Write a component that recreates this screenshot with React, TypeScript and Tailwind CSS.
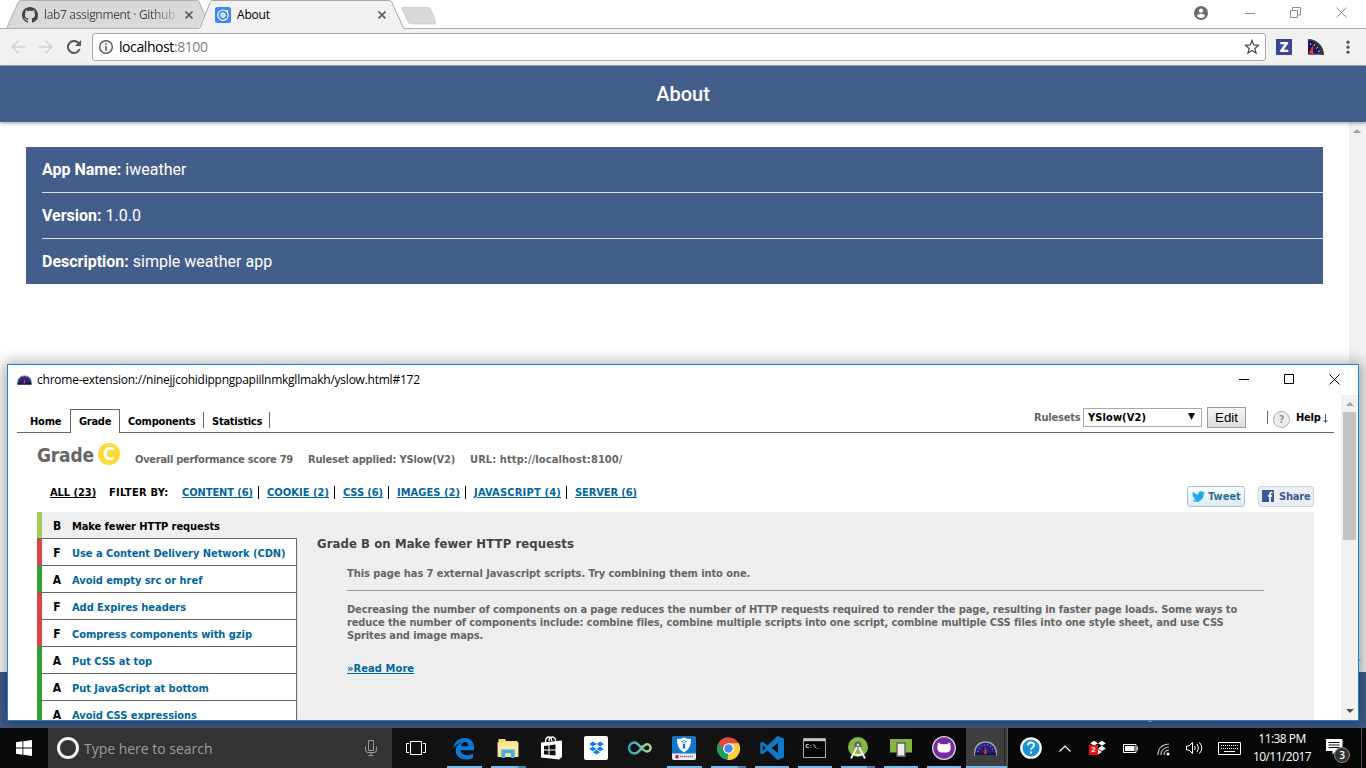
import React from "react";

const SEG = "font-['Open_Sans',sans-serif]";

function Gauge({ className }: { className: string }) {
  return (
    <svg viewBox="0 0 24 15" className={className}>
      <path d="M0 15V12C0 5 5 0 12 0s12 5 12 12v3z" fill="#a4a4b0" />
      <path d="M1.500 14v-2C1.500 6 6 1.500 12 1.500S22.500 6 22.500 12v2z" fill="#20207c" />
      <path d="M4 11c.5-4.500 4-7.500 8-7.500s7.500 3 8 7.500" fill="none" stroke="#9fa3d8" strokeWidth="1.200" strokeDasharray="1 2.400" />
      <path d="M1 12h22v3H1z" fill="#15153f" />
      <path d="M12 4l1.600 9h-3.200z" fill="#f02a2a" />
    </svg>
  );
}

function QuarterGauge() {
  return (
    <svg viewBox="0 0 16 16" className="h-4 w-4">
      <path d="M0 0c9 0 16 7 16 16H0z" fill="#3a3a3a" />
      <path d="M0 2c7 0 13 6 13 14H0z" fill="#17175e" />
      <path d="M2 4l1 2M7 5l-1 2M10 8l-2 1.500M12 12l-2 .5" stroke="#c4c8ee" strokeWidth="1" />
      <path d="M5.500 5L1 14l4 1z" fill="#f53030" />
      <path d="M0 14.500h13V16H0z" fill="#6d5a8e" />
    </svg>
  );
}

function GithubMark({ className }: { className: string }) {
  return (
    <svg viewBox="0 0 16 16" className={className} fill="currentColor">
      <path d="M8 0C3.580 0 0 3.580 0 8c0 3.540 2.290 6.530 5.470 7.590.4.070.55-.17.55-.38 0-.19-.01-.82-.01-1.490-2.010.37-2.530-.49-2.690-.94-.09-.23-.48-.94-.82-1.130-.28-.15-.68-.52-.01-.53.63-.01 1.080.58 1.230.82.72 1.210 1.870.87 2.330.66.070-.52.28-.87.51-1.070-1.780-.2-3.640-.89-3.640-3.950 0-.87.31-1.590.82-2.150-.08-.2-.36-1.020.08-2.120 0 0 .67-.21 2.200.82.64-.18 1.320-.27 2-.27s1.360.09 2 .27c1.530-1.040 2.200-.82 2.200-.82.44 1.100.16 1.920.08 2.120.51.56.82 1.270.82 2.150 0 3.070-1.870 3.750-3.650 3.950.29.25.54.73.54 1.480 0 1.070-.01 1.930-.01 2.200 0 .21.15.46.55.38A8.010 8.010 0 0 0 16 8c0-4.420-3.580-8-8-8z" />
    </svg>
  );
}

function TabStrip() {
  return (
    <div className="relative h-[29px] bg-white">
      <svg viewBox="0 0 1366 29" className="absolute inset-0 h-[29px] w-[1366px]">
        <path d="M0 28.500h1366" stroke="#acacac" />
        <path d="M6.500 28.500L18.500 1.500q.6-1 2-1H197q1.500 0 2 1L206 18l-7 10.500z" fill="#d9d9d9" stroke="#b0b0b0" />
        <path d="M198 29L210.500 1.500q.5-1 2-1H389q2 0 2.500 1L404 28.500v.5z" fill="#f1f1f1" />
        <path d="M198 28.500q1.500 0 2-1L210.500 1.500q.5-1 2-1H389q2 0 2.500 1L403 27q.7 1.500 2.500 1.500" fill="none" stroke="#a5a5a5" />
        <path d="M403 7.500h25q2 0 2.700 1.500l5 13q.6 2-1.200 2h-24q-1.500 0-2.200-1.500L402 9q-.5-1.500 1-1.500z" fill="#d8d8d8" stroke="#c6c6c6" strokeWidth=".7" />
      </svg>
      <div className={`relative flex h-[29px] items-center text-[12px] text-black ${SEG}`}>
        <GithubMark className="ml-[22px] h-4 w-4 text-[#444]" />
        <span className="ml-[6px] w-[135px] overflow-hidden whitespace-nowrap bg-[linear-gradient(90deg,#444_80%,#c8c8c8)] bg-clip-text tracking-[-0.33px] text-transparent">lab7 assignment · Github</span>
        <svg viewBox="0 0 8 8" className="ml-[6px] h-2 w-2"><path d="M.5.5l7 7M7.500.5l-7 7" stroke="#5a5a5a" strokeWidth="1.600" /></svg>
        <svg viewBox="0 0 16 16" className="ml-[22px] h-4 w-4">
          <rect width="16" height="16" rx="2.500" fill="#3e86f7" />
          <circle cx="8" cy="8.200" r="5.200" fill="none" stroke="#fff" strokeWidth="1.200" />
          <circle cx="8" cy="8.200" r="2.400" fill="#bcd6ff" stroke="#fff" strokeWidth=".8" />
          <circle cx="12.300" cy="4" r="1" fill="#fff" />
        </svg>
        <span className="ml-[6px] w-[35px] tracking-[-0.2px]">About</span>
        <svg viewBox="0 0 8 8" className="ml-[106px] h-2 w-2"><path d="M.5.5l7 7M7.500.5l-7 7" stroke="#5a5a5a" strokeWidth="1.600" /></svg>
        <svg viewBox="0 0 14 14" className="ml-[808px] -mt-[3px] h-[14px] w-[14px]">
          <circle cx="7" cy="7" r="7" fill="#6b6b6b" /><circle cx="7" cy="4.700" r="2.100" fill="#fff" /><path d="M2.900 10c.8-3 7.400-3 8.200 0-2 2.600-6.200 2.600-8.200 0z" fill="#fff" />
        </svg>
        <svg viewBox="0 0 10 10" className="ml-[37px] -mt-[3px] h-[10px] w-[10px]"><path d="M0 5.500h10" stroke="#8e8e8e" /></svg>
        <svg viewBox="0 0 11 11" className="ml-[35px] -mt-[4px] h-[11px] w-[11px]"><path d="M.5 3.500h7v7h-7zM2.500 3.500v-3h8v7.500H8" fill="none" stroke="#8e8e8e" /></svg>
        <svg viewBox="0 0 11 11" className="ml-[35px] -mt-[4px] h-[11px] w-[11px]"><path d="M.5.5l10 10M10.500.5l-10 10" stroke="#8e8e8e" /></svg>
      </div>
    </div>
  );
}

function Toolbar() {
  return (
    <div className="flex h-[37px] items-center border-b border-[#b0b0b0] bg-[#f1f1f1]">
      <svg viewBox="0 0 14 14" className="ml-[11px] h-[14px] w-[14px]"><path d="M14 7H1.500M7.500.8L1.300 7l6.200 6.200" fill="none" stroke="#d2d2d2" strokeWidth="1.700" /></svg>
      <svg viewBox="0 0 14 14" className="ml-[14px] h-[14px] w-[14px]"><path d="M0 7h12.500M6.500.8L12.700 7l-6.200 6.200" fill="none" stroke="#d2d2d2" strokeWidth="1.700" /></svg>
      <svg viewBox="0 0 14 14" className="ml-[14px] h-[14px] w-[14px]"><path d="M12.600 9A6 6 0 1 1 11.300 2.800L12.500 4" fill="none" stroke="#555" strokeWidth="2" /><path d="M14 0v6H8z" fill="#555" /></svg>
      <div className="ml-[11px] flex h-[28px] w-[1174px] items-center rounded-[3px] border border-[#a9a9a9] bg-white">
        <svg viewBox="0 0 14 14" className="ml-[6px] h-[14px] w-[14px]"><circle cx="7" cy="7" r="6.300" fill="none" stroke="#555" strokeWidth="1.400" /><path d="M7 6v4.700M7 3.200v1.700" stroke="#555" strokeWidth="1.600" /></svg>
        <span className={`-mt-px ml-[6px] text-[14px] tracking-[-0.42px] text-black ${SEG}`}>localhost<span className="text-[#808080]">:8100</span></span>
        <svg viewBox="0 0 16 16" className="ml-auto mr-[5px] h-4 w-4"><path d="M8 1.500l1.800 4.400 4.700.4-3.600 3.100 1.100 4.600L8 11.500l-4 2.500 1.100-4.600-3.600-3.100 4.700-.4z" fill="none" stroke="#4f4f4f" strokeWidth="1.300" /></svg>
      </div>
      <span className="ml-[10px] flex h-4 w-4 items-center justify-center bg-[#3a4595] font-['Open_Sans',sans-serif] text-[14px] font-extrabold leading-4 text-white"><span className="-mt-px">Z</span></span>
      <div className="ml-[16px]"><QuarterGauge /></div>
      <svg viewBox="0 0 4 14" className="ml-[22px] h-[14px] w-[4px]" fill="#555"><circle cx="2" cy="2.200" r="1.600" /><circle cx="2" cy="7.200" r="1.600" /><circle cx="2" cy="12.200" r="1.600" /></svg>
    </div>
  );
}

function AboutRow({ label, value, last }: { label: string; value: string; last?: boolean }) {
  return (
    <div className={last ? "flex h-[45px] items-center" : "flex h-[46px] items-center border-b border-[#dedede]"}>
      <span><b>{label}</b> {value}</span>
    </div>
  );
}

function AboutPage() {
  return (
    <div className="flex flex-1 flex-col bg-white font-['Roboto',sans-serif] text-white">
      <div className="z-10 flex h-[56px] items-center justify-center bg-[#445e8c] text-[20px] font-medium shadow-[0_1px_4px_rgba(0,0,0,0.4)]">About</div>
      <div className="flex flex-1">
        <div className="flex-1 pl-[26px] pr-[26px] pt-[25px]">
          <div className="bg-[#445e8c] pl-4 text-[16px]">
            <AboutRow label="App Name:" value="iweather" />
            <AboutRow label="Version:" value="1.0.0" />
            <AboutRow label="Description:" value="simple weather app" last />
          </div>
        </div>
        <div className="flex w-[17px] flex-col justify-between bg-[#f1f1f1] pb-[9px] pl-[4px] pt-[7px]">
          <svg viewBox="0 0 8 4" className="h-1 w-2"><path d="M0 4l4-4 4 4z" fill="#a0a0a0" /></svg>
          <svg viewBox="0 0 8 4" className="h-1 w-2"><path d="M0 0l4 4 4-4z" fill="#a0a0a0" /></svg>
        </div>
      </div>
      <div className="flex h-[56px] items-end bg-[#445e8c]">
        <i className="mb-[6px] ml-[1148px] h-px w-[4px] bg-[#aab6cc]" />
      </div>
    </div>
  );
}

const FILTERS = [
  { text: "CONTENT (6)", cls: "w-[71px] tracking-[-0.08px]" },
  { text: "COOKIE (2)", cls: "w-[62px] tracking-[0.04px]" },
  { text: "CSS (6)", cls: "w-[40px] tracking-[-0.1px]" },
  { text: "IMAGES (2)", cls: "w-[63px] tracking-[0.04px]" },
  { text: "JAVASCRIPT (4)", cls: "w-[87px] tracking-[0.2px]" },
  { text: "SERVER (6)", cls: "w-[62px] tracking-[-0.09px]" },
];

const RULES = [
  { grade: "F", color: "bg-[#dd4444]", text: "Use a Content Delivery Network (CDN)" },
  { grade: "A", color: "bg-[#33a033]", text: "Avoid empty src or href" },
  { grade: "F", color: "bg-[#dd4444]", text: "Add Expires headers" },
  { grade: "F", color: "bg-[#dd4444]", text: "Compress components with gzip" },
  { grade: "A", color: "bg-[#33a033]", text: "Put CSS at top" },
  { grade: "A", color: "bg-[#33a033]", text: "Put JavaScript at bottom" },
  { grade: "A", color: "bg-[#33a033]", text: "Avoid CSS expressions" },
];

function PopupTabs() {
  return (
    <div className="mr-[7px] flex h-[38px] border-b border-[#666] text-black">
      <div className="flex h-[37px] items-center pl-[13px] pt-[15px]">
        <span className="w-[40px] tracking-[-0.2px]">Home</span>
      </div>
      <div className="mt-[14px] flex h-[24px] w-[50px] items-center justify-center border border-b-0 border-[#666] bg-white tracking-[-0.25px]">Grade</div>
      <div className="flex h-[37px] items-center pt-[15px]">
        <span className="ml-[8px] w-[75px] tracking-[-0.22px]">Components</span>
        <i className="-mt-[2px] h-4 w-px bg-[#666]" />
        <span className="ml-[8px] w-[57px] tracking-[-0.23px]">Statistics</span>
        <i className="-mt-[2px] h-4 w-px bg-[#666]" />
      </div>
      <div className="ml-auto flex h-[37px] items-center pt-[8px]">
        <span className="w-[49px] tracking-[-0.2px] text-[#666]">Rulesets</span>
        <div className="flex h-[19px] w-[119px] items-center justify-between border border-[#a9a9a9] bg-white pl-[4px] pr-[6px] tracking-[0.1px]">
          <span>YSlow(V2)</span>
          <svg viewBox="0 0 7 7" className="-mt-[2px] h-[7px] w-[7px]"><path d="M0 0h7L3.500 7z" fill="#111" /></svg>
        </div>
        <div className="ml-[5px] flex h-[21px] w-[39px] items-center justify-center border border-[#9c9c9c] bg-[linear-gradient(#f6f6f6,#dddddd)] font-['Liberation_Sans',sans-serif] text-[13.3px] font-normal">Edit</div>
        <i className="ml-[21px] h-[13px] w-px bg-[#666]" />
        <span className="ml-[5px] mt-[3px] flex h-[17px] w-[17px] items-center justify-center rounded-full border border-[#aaa] bg-[#eee] text-[11px] text-[#999]">?</span>
        <span className="ml-[6px] w-[27px] tracking-[-0.2px]">Help</span>
        <svg viewBox="0 0 5 9" className="mr-[6px] mt-[2px] h-[9px] w-[5px]"><path d="M2.500 0v8.500M.5 6l2 2.500 2-2.500" fill="none" stroke="#445" strokeWidth=".9" /></svg>
      </div>
    </div>
  );
}

function Popup() {
  return (
    <div className="absolute left-[7px] top-[364px] flex h-[357px] w-[1352px] flex-col overflow-hidden border border-[#1883d7] bg-white font-['DejaVu_Sans_Condensed','DejaVu_Sans',sans-serif] text-[11px] font-bold leading-[13px]">
      <div className={`flex h-[30px] shrink-0 items-center text-[12px] font-normal text-black ${SEG}`}>
        <Gauge className="ml-[9px] h-[10px] w-[15px]" />
        <span className="-mt-px ml-[5px] tracking-[-0.24px]">chrome-extension://ninejjcohidippngpapiilnmkgllmakh/yslow.html#172</span>
        <svg viewBox="0 0 10 10" className="ml-auto h-[10px] w-[10px]"><path d="M0 5.500h10" stroke="#000" transform="translate(0 -1)" /></svg>
        <svg viewBox="0 0 10 10" className="ml-[35px] -mt-[3px] h-[10px] w-[10px]"><path d="M.5.5h9v9h-9z" fill="none" stroke="#000" /></svg>
        <svg viewBox="0 0 11 11" className="ml-[35px] mr-[18px] -mt-[2px] h-[11px] w-[11px]"><path d="M.5.5l10 10M10.500.5l-10 10" stroke="#000" /></svg>
      </div>
      <div className="flex min-h-0 flex-1">
        <div className="flex min-w-0 flex-1 flex-col pl-[9px]">
          <PopupTabs />
          <div className="flex h-[42px] items-center pl-[20px] text-[#666]">
            <span className="mt-[2px] w-[61px] text-[19px] leading-[20px] tracking-[-0.2px]">Grade</span>
            <span className="flex h-[22px] w-[22px] items-center justify-center rounded-full bg-[#fddb36] text-[18px] leading-[22px] text-white">C</span>
            <span className="ml-[15px] mt-[10px] w-[173px] tracking-[-0.27px]">Overall performance score 79</span>
            <span className="mt-[10px] w-[162px] tracking-[-0.17px]">Ruleset applied: YSlow(V2)</span>
            <span className="mt-[10px] tracking-[0.1px]">URL: http://localhost:8100/</span>
          </div>
          <div className="flex h-[37px] items-center pb-[2px] pl-[33px] text-black">
            <span className="w-[59px] tracking-[-0.05px] underline underline-offset-1">ALL (23)</span>
            <span className="w-[73px] tracking-[0.3px]">FILTER BY:</span>
            {FILTERS.map((f, i) => (
              <div key={f.text} className="flex items-center">
                <span className={`whitespace-nowrap text-[#0066a0] underline underline-offset-1 ${f.cls}`}>{f.text}</span>
                {i < 5 && <i className="ml-[5px] mr-[8px] h-[13px] w-px bg-black" />}
              </div>
            ))}
            <div className="ml-auto mr-[13px] mt-[7px] flex h-[21px] w-[58px] items-center rounded-[3px] border border-[#a6c4d8] bg-[linear-gradient(#ffffff,#dcebf6)] pl-[4px] text-[#2e6e98]">
              <svg viewBox="0 0 24 24" className="h-[13px] w-[13px] shrink-0" fill="#1da9ea"><path d="M23.953 4.570a10 10 0 0 1-2.825.775 4.958 4.958 0 0 0 2.163-2.723 10 10 0 0 1-3.127 1.184 4.920 4.920 0 0 0-8.384 4.482C7.690 8.095 4.067 6.130 1.640 3.162a4.822 4.822 0 0 0-.666 2.475c0 1.710.87 3.213 2.188 4.096a4.904 4.904 0 0 1-2.228-.616v.06a4.923 4.923 0 0 0 3.946 4.827 4.996 4.996 0 0 1-2.212.085 4.936 4.936 0 0 0 4.604 3.417 9.867 9.867 0 0 1-6.102 2.105c-.39 0-.779-.023-1.170-.067a13.995 13.995 0 0 0 7.557 2.209c9.053 0 13.998-7.496 13.998-13.985 0-.21 0-.42-.015-.63a9.935 9.935 0 0 0 2.460-2.548z" /></svg>
              <span className="ml-[3px]">Tweet</span>
            </div>
            <div className="mr-[27px] mt-[7px] flex h-[21px] w-[56px] items-center rounded-[3px] border border-[#cad4e7] bg-[#eceef5] pl-[3px] text-[#3b5998]">
              <svg viewBox="0 0 12 12" className="h-3 w-3 shrink-0"><path d="M0 0h12v12H0z" fill="#3b5998" /><path d="M10.500 2.500H9.300Q8 2.500 8 4v8M5.800 6h4.400" fill="none" stroke="#fff" strokeWidth="1.700" /></svg>
              <span className="ml-[5px] tracking-[-0.2px]">Share</span>
            </div>
          </div>
          <div className="ml-[20px] mr-[27px] flex min-h-0 flex-1 overflow-hidden bg-[#eeeeee]">
            <div className="w-[260px] shrink-0">
              <div className="flex h-[27px] items-center border-b border-[#666] bg-[#eee]">
                <i className="h-full w-[5px] bg-[#a4cc58]" />
                <span className="mt-[2px] w-[30px] text-center text-[12px] text-black">B</span>
                <span className="mt-[2px] tracking-[-0.08px] text-black">Make fewer HTTP requests</span>
              </div>
              {RULES.map((r) => (
                <div key={r.text} className="flex h-[27px] items-center border-b border-r border-[#666] bg-white">
                  <i className={`h-full w-[5px] ${r.color}`} />
                  <span className="mt-[2px] w-[30px] text-center text-[12px] text-black">{r.grade}</span>
                  <span className="mt-[2px] tracking-[-0.04px] text-[#0066a0]">{r.text}</span>
                </div>
              ))}
            </div>
            <div className="flex-1 pl-[20px] pr-[50px] pt-[24px] text-[#666]">
              <div className="text-[13px] leading-[15px] tracking-[0.08px] text-[#444]">Grade B on Make fewer HTTP requests</div>
              <div className="ml-[30px] mt-[16px] border-b border-[#999] pb-[10px] tracking-[-0.07px]">This page has 7 external Javascript scripts. Try combining them into one.</div>
              <div className="ml-[30px] mt-[12px] whitespace-nowrap tracking-[-0.115px]">
                Decreasing the number of components on a page reduces the number of HTTP requests required to render the page, resulting in faster page loads. Some ways to<br />
                reduce the number of components include: combine files, combine multiple scripts into one script, combine multiple CSS files into one style sheet, and use CSS<br />
                Sprites and image maps.
              </div>
              <div className="ml-[30px] mt-[20px] tracking-[0.1px] text-[#0066a0] underline underline-offset-1">»Read More</div>
            </div>
          </div>
        </div>
        <div className="flex w-[17px] flex-col items-center bg-[#f1f1f1] pt-[7px]">
          <svg viewBox="0 0 8 4" className="h-1 w-2"><path d="M0 4l4-4 4 4z" fill="#a0a0a0" /></svg>
          <div className="mt-[6px] h-[128px] w-[13px] bg-[#c1c1c1]" />
          <svg viewBox="0 0 8 4" className="mb-[7px] mt-auto h-1 w-2"><path d="M0 0l4 4 4-4z" fill="#505050" /></svg>
        </div>
      </div>
    </div>
  );
}

function TaskButton({ children, line, w = "w-[44px]" }: { children: React.ReactNode; line?: "one" | "two"; w?: string }) {
  return (
    <div className={`relative flex h-full shrink-0 items-center justify-center ${w}`}>
      {children}
      {line && <i className="absolute bottom-0 left-[5px] right-[4px] h-[2px] bg-[#76b9ed]" />}
      {line === "two" && <i className="absolute bottom-0 right-[4px] h-[2px] w-[8px] bg-[#4f7fa6]" />}
    </div>
  );
}

const DROPBOX = "M6 1L0 5l6 4 6-4zM18 1l-6 4 6 4 6-4zM0 13l6 4 6-4-6-4zM18 9l-6 4 6 4 6-4zM6 18.300l6 4 6-4-6-4z";

function Taskbar() {
  return (
    <div className="flex h-[40px] items-center bg-[linear-gradient(100deg,#070a08,#111_30%,#141414_50%,#080808_70%,#050705)] text-white">
      <div className="flex w-[48px] shrink-0 justify-center">
        <svg viewBox="0 0 16 16" className="h-4 w-4" fill="#fff"><path d="M0 2.200l6.500-.9v6.300H0zM7.300 1.200L16 0v7.600H7.300zM0 8.400h6.500v6.300L0 13.800zM7.300 8.400H16V16l-8.700-1.200z" /></svg>
      </div>
      <div className="flex h-full w-[344px] shrink-0 items-center bg-[#333]">
        <i className="ml-[9px] h-[22px] w-[22px] rounded-full border-[3px] border-[#f0f0f0]" />
        <span className={`ml-[5px] text-[14px] tracking-[-0.02px] text-[#9c9c9c] ${SEG}`}>Type here to search</span>
        <svg viewBox="0 0 12 16" className="ml-auto mr-[15px] h-4 w-3"><path d="M3.500.5h5v10h-5zM.5 6.500V10q0 2.500 2.500 2.500h6q2.500 0 2.500-2.500V6.500M6 12.500v3M3.500 15.500h5" fill="none" stroke="#9a9a9a" /></svg>
      </div>
      <TaskButton w="w-[50px]">
        <svg viewBox="0 0 20 14" className="-ml-[2px] h-[14px] w-[20px]"><path d="M4.500.5h11v13h-11zM3 2.500H.5v9H3M17 2.500h2.500v9H17" fill="none" stroke="#fff" /></svg>
      </TaskButton>
      <TaskButton line="one">
        <svg viewBox="0 0 24 24" className="h-[23px] w-[22px]" fill="#0a7ad6"><path d="M.5 12C1 5 6 .500 12.500.500 19 .500 23 5 23 11.500V14H8.300c.2 3.800 3.700 5.500 7.200 5.300 2.300-.1 4.300-.7 6.300-1.800v4.800c-2.500 1.200-5 1.700-7.700 1.700C7.500 24 3 20 3 14.500c0-3.900 2-7 5.500-8.800C6 6 2.500 8.500.500 12zm8.300-2.500h7.900c0-2.800-1.300-4.500-3.800-4.500-2.300 0-3.800 1.900-4.100 4.500z" /></svg>
      </TaskButton>
      <TaskButton line="two">
        <svg viewBox="0 0 22 20" className="h-[19px] w-[22px]"><path d="M1 0h7l1 2h12v16H1z" fill="#f9d570" /><path d="M0 3.500h22V19H0z" fill="#fde8a0" /><path d="M4 20v-9h14v9h-4v-5H8v5z" fill="#3fb0e2" /></svg>
      </TaskButton>
      <TaskButton>
        <svg viewBox="0 0 22 24" className="-ml-[3px] h-[24px] w-[22px]"><path d="M5.500 6q0-4.500 3-5 3-.3 3.300 4M9 5q0-4 3.500-4.200Q15.500 1 15.500 5" fill="none" stroke="#fff" strokeWidth="1.300" /><path d="M1 6.500L22 4.500v16.500L19 23.500 1 21.500z" fill="#fff" /><path d="M4 10l4.500-.6v4.200H4zM9.500 9.300l6-.8v5h-6zM4 14.600h4.500v4.200L4 18.400zM9.500 14.600h6v5l-6-.6z" fill="#111" /></svg>
      </TaskButton>
      <TaskButton>
        <span className="flex h-6 w-6 items-center justify-center rounded-[2px] bg-white"><svg viewBox="0 0 24 23" className="h-[14px] w-[15px]" fill="#0a82ee"><path d={DROPBOX} /></svg></span>
      </TaskButton>
      <TaskButton>
        <svg viewBox="0 0 24 14" className="h-[14px] w-[24px]"><defs><linearGradient id="inf"><stop stopColor="#2ea3c4" /><stop offset=".55" stopColor="#71c1a5" /><stop offset="1" stopColor="#b2d58c" /></linearGradient></defs><path d="M15 4.500C12.500 8 11 12.500 6.500 12.500a5.500 5.500 0 0 1 0-11C11 1.500 14 10.500 19 10.500a3.500 3.500 0 0 0 0-7.300c-2.500 0-4 2.800-6 5.500" fill="none" stroke="url(#inf)" strokeWidth="2.400" /></svg>
      </TaskButton>
      <TaskButton line="one">
        <svg viewBox="0 0 24 24" className="h-6 w-6"><rect width="24" height="24" rx="2" fill="#1377c9" /><path d="M0 17.500h24V22q0 2-2 2H2q-2 0-2-2z" fill="#e9eef4" /><path d="M5 3Q9 3 12 1.500q3 1.500 7 1.500.5 9.500-7 13.500Q4.500 12.500 5 3z" fill="#fff" /><path d="M10.800 8h2.400v4.500h-2.400z" fill="#1377c9" /><path d="M9 5.700q3-2.400 6 0M10.200 7.200q1.800-1.400 3.600 0" fill="none" stroke="#1377c9" strokeWidth=".8" /><path d="M3.500 19h3v3l-1.500.7-1.500-.7z" fill="#c8203c" /><path d="M8 20.500h13" stroke="#777" strokeWidth="1.500" strokeDasharray="1.400 .6" /></svg>
      </TaskButton>
      <TaskButton line="two">
        <svg viewBox="0 0 24 24" className="h-[23px] w-[23px]"><path d="M12 12L1.600 6A12 12 0 0 0 11 24l5-10z" fill="#1da05f" /><path d="M12 12L11 24A12 12 0 0 0 22.400 6H12z" fill="#fdce3e" /><path d="M1.600 6A12 12 0 0 1 22.400 6.500H12L7 14z" fill="#dd4b3e" /><circle cx="12" cy="12" r="5.600" fill="#fff" /><circle cx="12" cy="12" r="4.400" fill="#4587f3" /></svg>
      </TaskButton>
      <TaskButton line="one" w="w-[43px]">
        <svg viewBox="0 0 24 24" className="h-6 w-6" fill="#1079c8"><path d="M17.500 0L24 2.500v19L17.500 24 7.500 14.500 2.500 18.300.3 17.200V6.800L2.500 5.700l5 3.800zm.5 7l-6.500 5L18 17zM2.800 9v6l3-3z" fillRule="evenodd" /></svg>
      </TaskButton>
      <TaskButton line="one" w="w-[43px]">
        <svg viewBox="0 0 23 20" className="h-[20px] w-[23px]"><path d="M.5.500h22v19H.5z" fill="#050505" stroke="#aaa" /><path d="M1 1h21v2.200H1z" fill="#c8c8c8" /><text x="2.500" y="9.500" fontSize="6" fontWeight="bold" fill="#eee" fontFamily="Liberation Mono, monospace">C:\_</text></svg>
      </TaskButton>
      <TaskButton line="two" w="w-[43px]">
        <svg viewBox="0 0 24 24" className="h-6 w-6"><circle cx="12" cy="11" r="10" fill="#84b842" /><circle cx="12" cy="9" r="3.500" fill="#5e6469" /><circle cx="12" cy="9" r="1.300" fill="#c8d8bb" /><path d="M11 11L5 22.500M13 11l6 11.500M6.500 17.500q5.500 3 11 0" fill="none" stroke="#eee" strokeWidth="1.900" /></svg>
      </TaskButton>
      <TaskButton line="one" w="w-[43px]">
        <svg viewBox="0 0 22 18" className="h-[18px] w-[22px]"><path d="M0 0h22v13.500H0z" fill="#81b53e" /><path d="M7 4h8v13.300H7z" fill="#eee" stroke="#606060" strokeWidth="1.400" /></svg>
      </TaskButton>
      <TaskButton line="one" w="w-[43px]">
        <svg viewBox="0 0 24 24" className="h-6 w-6"><circle cx="12" cy="12" r="11.300" fill="#7b2b9d" stroke="#ddd" strokeWidth="1.300" /><path d="M6 6.500l3.500 1.800h5L18 6.500l.5 4q1 5-3.500 6H9q-4.500-1-3.500-6z" fill="#fff" /></svg>
      </TaskButton>
      <div className="relative ml-px flex h-full w-[42px] shrink-0 items-center justify-center border-r border-[#555] bg-[#3f3f3f]">
        <Gauge className="-ml-[2px] h-[15px] w-[23px]" />
        <i className="absolute inset-y-0 right-0 w-[3px] border-l border-[#222]" />
        <i className="absolute bottom-0 left-0 right-0 h-[2px] bg-[#76b9ed]" />
      </div>
      <svg viewBox="0 0 22 22" className="ml-[12px] h-[22px] w-[22px] shrink-0"><circle cx="11" cy="11" r="9.700" fill="#1595d3" stroke="#fff" strokeWidth="2.300" /><path d="M8 8.500q0-3 3-3t3 2.600q0 1.400-1.500 2.400t-1.500 2.300M11 14.500v2" fill="none" stroke="#fff" strokeWidth="1.900" /></svg>
      <svg viewBox="0 0 12 7" className="ml-[17px] h-[7px] w-3 shrink-0"><path d="M.5 6.500L6 1l5.500 5.500" fill="none" stroke="#fff" strokeWidth="1.200" /></svg>
      <div className="relative ml-[19px] h-[16px] w-[16px] shrink-0">
        <svg viewBox="0 0 24 23" className="h-[15px] w-[16px]" fill="#fff"><path d={DROPBOX} /></svg>
        <span className="absolute -left-px top-[5px] flex h-[10px] w-[9px] items-center justify-center bg-[#f20d0d] font-['Liberation_Sans',sans-serif] text-[8px] font-bold">2</span>
      </div>
      <svg viewBox="0 0 15 9" className="ml-[17px] h-[9px] w-[15px] shrink-0"><path d="M.5.5h12.500v8H.5zM14.300 2.500v4" fill="none" stroke="#fff" /><path d="M2 2h9.500v5H2z" fill="#fff" /></svg>
      <svg viewBox="0 0 13 13" className="ml-[19px] mt-[2px] h-[13px] w-[13px] shrink-0"><path d="M1 12Q1 2 12 1M4 12q0-7 8-8M7 12q0-4.500 5-5" fill="none" stroke="#bbb" strokeWidth="1.200" /><circle cx="11" cy="11" r="1.600" fill="#fff" /></svg>
      <svg viewBox="0 0 17 14" className="ml-[16px] h-[14px] w-[17px] shrink-0"><path d="M.5 5h2.500L6.500 1.500v11L3 9H.5zM8.500 5q1.500 2 0 4M11 3q3 4 0 8M13.500 1.500q4.500 5.500 0 11" fill="none" stroke="#fff" /></svg>
      <svg viewBox="0 0 23 13" className="ml-[15px] h-[13px] w-[23px] shrink-0"><path d="M.5.5h22v12H.5z" fill="none" stroke="#fff" /><path d="M3 3.500h17M3 6.500h17" stroke="#fff" strokeDasharray="1 1" /><path d="M6 9.500h11" stroke="#fff" /></svg>
      <div className={`ml-[10px] w-[62px] shrink-0 text-center text-[12px] leading-[18px] tracking-[-0.55px] ${SEG}`}>
        <div>11:38 PM</div>
        <div>10/11/2017</div>
      </div>
      <div className="relative ml-[13px] h-[26px] w-[26px] shrink-0">
        <svg viewBox="0 0 17 16" className="absolute left-0 top-[4px] h-4 w-[17px]"><path d="M0 0h16.500v12H10l-3.500 3.500V12H0z" fill="#fff" /><path d="M2.500 3.500h11M2.500 6h11M2.500 8.500h11" stroke="#111" /></svg>
        <span className="absolute left-[8px] top-[12px] flex h-4 w-4 items-center justify-center rounded-full border border-[#888] bg-[#333] font-['Open_Sans',sans-serif] text-[10px] font-semibold">3</span>
      </div>
      <i className="ml-auto mr-[4px] h-full w-px bg-[#4a4a4a]" />
    </div>
  );
}

export default function App() {
  return (
    <div className="relative flex h-[768px] w-[1366px] flex-col overflow-hidden">
      <TabStrip />
      <Toolbar />
      <AboutPage />
      <Taskbar />
      <div className="pointer-events-none absolute left-0 top-[340px] h-[388px] w-[1366px] overflow-hidden">
        <div className="ml-[7px] mt-[24px] h-[357px] w-[1352px] shadow-[0_2px_14px_3px_rgba(0,0,0,0.35)]" />
      </div>
      <Popup />
    </div>
  );
}
